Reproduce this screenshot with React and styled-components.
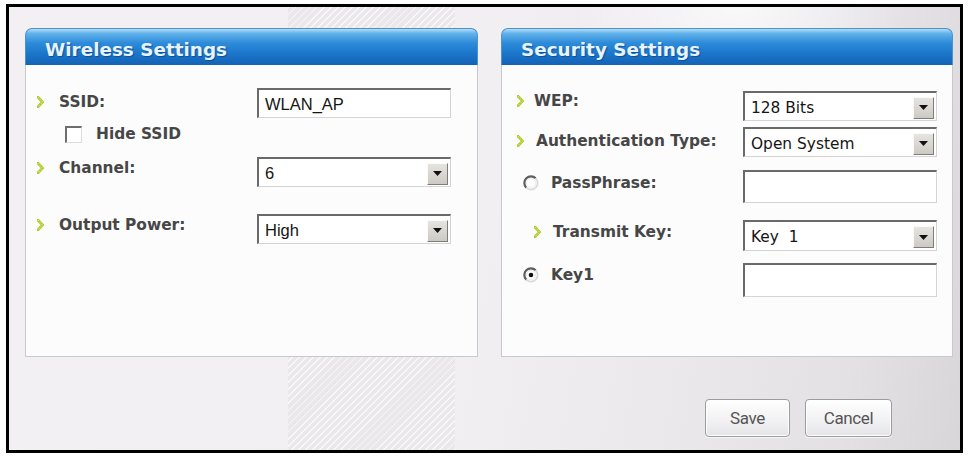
import React from 'react';
import styled, { createGlobalStyle } from 'styled-components';

const GlobalStyle = createGlobalStyle`
  html, body {
    margin: 0;
    padding: 0;
    background: #fff;
  }
  * {
    box-sizing: border-box;
  }
`;

function Bullet() {
  return (
    <svg width="7" height="12" viewBox="0 0 7 12">
      <path d="M1 1.2 L5.6 6 L1 10.8" fill="none" stroke="#b2cb32" strokeWidth="2.8" strokeLinecap="square" />
      <path d="M1 1.2 L5.6 6 L1 10.8" fill="none" stroke="#e9f47e" strokeWidth="1" strokeDasharray="1.3 1.5" />
    </svg>
  );
}

function Radio({ checked }) {
  return (
    <svg width="16" height="16" viewBox="0 0 16 16">
      <circle cx="8" cy="8" r="6.6" fill="#fff" />
      <path d="M12.7 3.3 A6.6 6.6 0 0 0 3.3 12.7" fill="none" stroke="#5e5e5e" strokeWidth="2.2" />
      <path d="M3.3 12.7 A6.6 6.6 0 0 0 12.7 3.3" fill="none" stroke="#dadada" strokeWidth="1.8" />
      <circle cx="8" cy="8" r="4.6" fill="none" stroke="#ececec" strokeWidth="1" />
      {checked && <circle cx="8" cy="8" r="2.3" fill="#111" />}
    </svg>
  );
}

function Select({ value, h = 30, $arial }) {
  return (
    <Box $h={h} $arial={$arial}>
      {value}
      <DropBtn>
        <svg width="9" height="5" viewBox="0 0 9 5">
          <path d="M0 0 H9 L4.5 5 Z" fill="#111" />
        </svg>
      </DropBtn>
    </Box>
  );
}

export default function App() {
  return (
    <>
      <GlobalStyle />
      <Page>
        <Frame>
          <Panels>
            <Panel $w={453}>
              <Header>Wireless Settings</Header>
              <Body $pl={11}>
                <Row $mt={23} $h={30}>
                  <Label $w={220} $mt={4} $gap={15}>
                    <Bullet />
                    SSID:
                  </Label>
                  <Box $h={30} $arial>WLAN_AP</Box>
                </Row>
                <Row $mt={6} $h={20} $center>
                  <Label $w={220} $gap={14} $indent={28}>
                    <Check />
                    Hide SSID
                  </Label>
                </Row>
                <Row $mt={13} $h={30}>
                  <Label $w={220} $mt={1} $gap={15}>
                    <Bullet />
                    Channel:
                  </Label>
                  <Select value="6" $arial />
                </Row>
                <Row $mt={27} $h={30}>
                  <Label $w={220} $mt={1} $gap={15}>
                    <Bullet />
                    Output Power:
                  </Label>
                  <Select value="High" $arial />
                </Row>
              </Body>
            </Panel>

            <Panel $w={452}>
              <Header>Security Settings</Header>
              <Body $pl={15}>
                <Row $mt={26} $h={30}>
                  <Label $w={226} $mt={0} $gap={10}>
                    <Bullet />
                    WEP:
                  </Label>
                  <Select value="128 Bits" />
                </Row>
                <Row $mt={6} $h={30}>
                  <Label $w={226} $mt={4} $gap={12}>
                    <Bullet />
                    Authentication Type:
                  </Label>
                  <Select value="Open System" />
                </Row>
                <Row $mt={13} $h={33}>
                  <Label $w={226} $mt={3} $gap={12} $indent={6}>
                    <Radio />
                    PassPhrase:
                  </Label>
                  <Box $h={33} />
                </Row>
                <Row $mt={17} $h={31}>
                  <Label $w={226} $mt={2} $gap={12} $indent={17}>
                    <Bullet />
                    Transmit Key:
                  </Label>
                  <Select value="Key  1" h={31} />
                </Row>
                <Row $mt={12} $h={34}>
                  <Label $w={226} $mt={2} $gap={12} $indent={6}>
                    <Radio checked />
                    Key1
                  </Label>
                  <Box $h={34} />
                </Row>
              </Body>
            </Panel>
          </Panels>

          <ButtonBar>
            <Button $w={85}>Save</Button>
            <Button $w={87}>Cancel</Button>
          </ButtonBar>
        </Frame>
      </Page>
    </>
  );
}

const Page = styled.div`
  padding: 4px 0 0 6px;
`;

const Frame = styled.div`
  width: 957px;
  height: 449px;
  border: 3px solid #000;
  display: flex;
  flex-direction: column;
  padding: 21px 7px 13px 16px;
  background:
    repeating-linear-gradient(135deg, rgba(255, 255, 255, 0.7) 0 1.2px, rgba(255, 255, 255, 0) 1.2px 5px) 279px 0 / 167px 100% no-repeat,
    linear-gradient(#ebe8ec, #ebe8ec) 279px 0 / 167px 100% no-repeat,
    radial-gradient(ellipse 240px 110px at 730px 0px, rgba(255, 255, 255, 0.75), rgba(255, 255, 255, 0) 70%),
    linear-gradient(100deg, #f3f0f4 0%, #f2eff3 50%, #eae8eb 72%, #e3e1e4 88%, #d8d6d9 100%);
`;

const Panels = styled.div`
  display: flex;
  gap: 23px;
`;

const Panel = styled.section`
  width: ${(p) => p.$w}px;
  height: 329px;
  display: flex;
  flex-direction: column;
`;

const Header = styled.h2`
  margin: 0;
  height: 37px;
  padding: 5px 0 0 19px;
  display: flex;
  align-items: center;
  border-radius: 7px 7px 0 0;
  border: 1px solid #4a92d0;
  border-bottom: none;
  background: linear-gradient(
    #b4def7 0%,
    #62b3ea 12%,
    #2e8cda 38%,
    #1b76ca 68%,
    #1462b6 100%
  );
  font-family: 'DejaVu Sans', Verdana, sans-serif;
  font-weight: bold;
  font-size: 18.4px;
  color: #e6f3fb;
  text-shadow: 1px 1px 1px #0d4f97;
`;

const Body = styled.div`
  flex: 1;
  display: flex;
  flex-direction: column;
  padding-left: ${(p) => p.$pl}px;
  background: #fdfcfd;
  border: 1px solid #c9c8cc;
  border-top: none;
`;

const Row = styled.div`
  display: flex;
  align-items: ${(p) => (p.$center ? 'center' : 'flex-start')};
  margin-top: ${(p) => p.$mt}px;
  height: ${(p) => p.$h}px;
`;

const Label = styled.div`
  display: flex;
  align-items: center;
  flex-shrink: 0;
  gap: ${(p) => p.$gap}px;
  width: ${(p) => p.$w}px;
  height: 20px;
  margin-top: ${(p) => p.$mt || 0}px;
  padding-left: ${(p) => p.$indent || 0}px;
  font-family: 'DejaVu Sans', Verdana, sans-serif;
  font-weight: bold;
  font-size: 15.4px;
  color: #464646;
  white-space: nowrap;
`;

const Check = styled.span`
  width: 17px;
  height: 17px;
  background: #fff;
  border-style: solid;
  border-width: 2px 1px 1px 2px;
  border-color: #6e6e6e #dcdcdc #dcdcdc #6e6e6e;
`;

const Box = styled.div`
  width: 194px;
  height: ${(p) => p.$h}px;
  display: flex;
  align-items: center;
  padding: 2px 0 0 6px;
  background: #fff;
  border-style: solid;
  border-width: 2px 1px 1px 2px;
  border-color: #6a6a6a #d4d4d4 #d4d4d4 #6a6a6a;
  font-family: ${(p) => (p.$arial ? "'Liberation Sans', Arial" : "'DejaVu Sans', Tahoma")}, sans-serif;
  font-size: ${(p) => (p.$arial ? '16.5px' : '15.4px')};
  color: #151515;
  white-space: pre;
`;

const DropBtn = styled.span`
  margin-left: auto;
  margin-right: 2px;
  align-self: center;
  width: 21px;
  height: 22px;
  display: flex;
  align-items: center;
  justify-content: center;
  background: linear-gradient(#e6e4e0, #cdcac4);
  border: 1px solid;
  border-color: #fafafa #7d7d7d #7d7d7d #fafafa;
`;

const ButtonBar = styled.div`
  margin-top: auto;
  display: flex;
  justify-content: flex-end;
  gap: 15px;
  padding-right: 61px;
`;

const Button = styled.button`
  width: ${(p) => p.$w}px;
  height: 38px;
  padding: 0;
  border: 1px solid #9c9c9e;
  border-radius: 4px;
  background: linear-gradient(#ffffff, #f1f0f2 60%, #e4e3e6);
  box-shadow: inset 0 0 0 1px #fff, 0 1px 0 #f6f6f6;
  font-family: Roboto, 'Liberation Sans', sans-serif;
  font-size: 17px;
  letter-spacing: -0.4px;
  color: #555;
`;
